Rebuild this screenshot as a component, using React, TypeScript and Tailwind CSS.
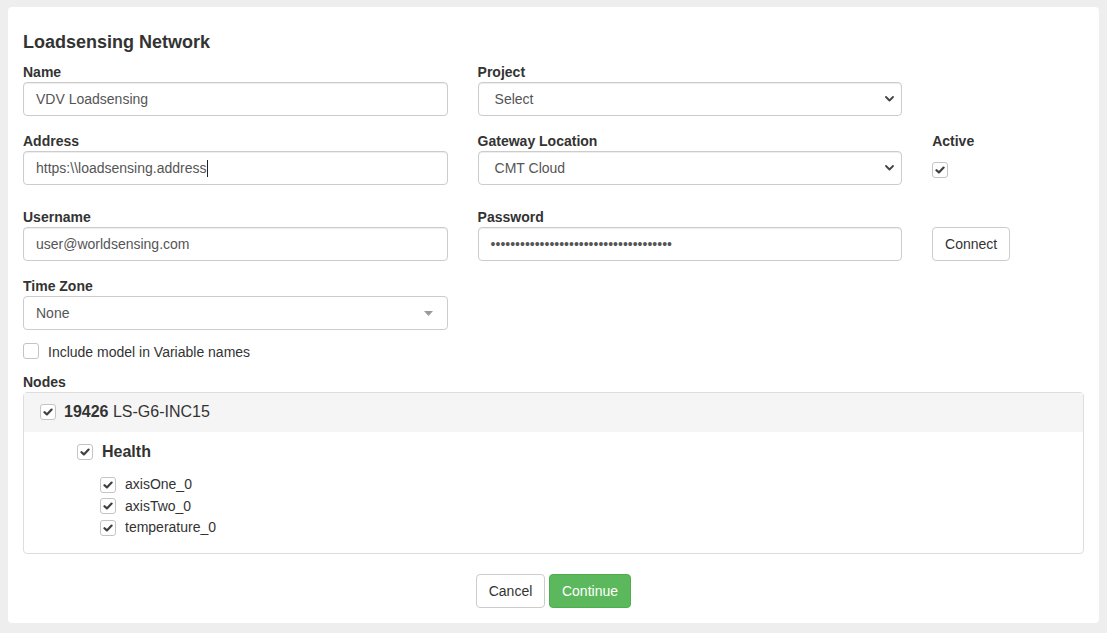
import React from "react";

const font = { fontFamily: '"Liberation Sans", Arial, Helvetica, sans-serif' };

function Check({ size = 16 }: { size?: number }) {
  return (
    <span
      className="inline-flex shrink-0 items-center justify-center rounded-[3px] border border-[#c4c4c4] bg-white"
      style={{ width: size, height: size }}
    >
      <svg width="10" height="8" viewBox="0 0 10 8" fill="none">
        <path d="M1.5 4.2 L3.9 6.4 L8.6 1.6" stroke="#3f3f3f" strokeWidth="2.2" strokeLinecap="round" strokeLinejoin="round" />
      </svg>
    </span>
  );
}

function Empty() {
  return <span className="inline-block h-[16px] w-[16px] shrink-0 rounded-[3px] border border-[#c4c4c4] bg-white" />;
}

function Label({ children }: { children: React.ReactNode }) {
  return <div className="h-[20px] text-[14px] font-bold leading-[20px] text-[#333]">{children}</div>;
}

function Field({ children }: { children: React.ReactNode }) {
  return (
    <div className="flex h-[34px] items-center rounded-[4px] border border-[#ccc] bg-white px-[12px] text-[14px] text-[#555] shadow-[inset_0_1px_1px_rgba(0,0,0,0.075)]">
      {children}
    </div>
  );
}

function NativeSelect({ value }: { value: string }) {
  return (
    <div className="flex h-[34px] items-center justify-between rounded-[4px] border border-[#ccc] bg-white pl-[16px] pr-[7px] text-[14px] text-[#555] shadow-[inset_0_1px_1px_rgba(0,0,0,0.075)]">
      <span>{value}</span>
      <svg width="9" height="6" viewBox="0 0 9 6" fill="none">
        <path d="M1 1 L4.5 4.5 L8 1" stroke="#444" strokeWidth="1.8" strokeLinecap="round" strokeLinejoin="round" />
      </svg>
    </div>
  );
}

export default function App() {
  return (
    <div style={font} className="min-h-screen bg-[#eeeeee] px-[8px] pb-[10px] pt-[7px] text-[#333]">
      <div className="rounded-[4px] bg-white px-[15px] pb-[15px] pt-[25px]">
        <h4 className="mb-[10px] h-[20px] text-[18px] font-bold leading-[20px] text-[#333]">Loadsensing Network</h4>

        {/* Row 1 */}
        <div className="-mx-[15px] flex">
          <div className="w-5/12 px-[15px]">
            <Label>Name</Label>
            <Field>VDV Loadsensing</Field>
          </div>
          <div className="w-5/12 px-[15px]">
            <Label>Project</Label>
            <NativeSelect value="Select" />
          </div>
          <div className="w-2/12 px-[15px]" />
        </div>

        {/* Row 2 */}
        <div className="-mx-[15px] mt-[15px] flex">
          <div className="w-5/12 px-[15px]">
            <Label>Address</Label>
            <Field>
              <span>https:\\loadsensing.address</span>
              <span className="ml-[1px] inline-block h-[17px] w-[1px] bg-[#222]" />
            </Field>
          </div>
          <div className="w-5/12 px-[15px]">
            <Label>Gateway Location</Label>
            <NativeSelect value="CMT Cloud" />
          </div>
          <div className="w-2/12 px-[15px]">
            <Label>Active</Label>
            <div className="mt-[11px] flex">
              <Check />
            </div>
          </div>
        </div>

        {/* Row 3 */}
        <div className="-mx-[15px] mt-[22px] flex">
          <div className="w-5/12 px-[15px]">
            <Label>Username</Label>
            <Field>user@worldsensing.com</Field>
          </div>
          <div className="w-5/12 px-[15px]">
            <Label>Password</Label>
            <div className="flex h-[34px] items-center rounded-[4px] border border-[#ccc] bg-white px-[12px] shadow-[inset_0_1px_1px_rgba(0,0,0,0.075)]">
              <span className="text-[14px] tracking-[0px] text-[#555]">
                {"•".repeat(37)}
              </span>
            </div>
          </div>
          <div className="w-2/12 px-[15px]">
            <div className="mt-[20px] flex">
              <button className="h-[34px] w-[78px] rounded-[4px] border border-[#ccc] bg-white text-[14px] text-[#333]">
                Connect
              </button>
            </div>
          </div>
        </div>

        {/* Row 4 */}
        <div className="-mx-[15px] mt-[15px] flex">
          <div className="w-5/12 px-[15px]">
            <Label>Time Zone</Label>
            <div className="flex h-[34px] items-center justify-between rounded-[4px] border border-[#ccc] bg-white pl-[12px] pr-[14px] text-[14px] text-[#555]">
              <span>None</span>
              <svg width="9" height="5" viewBox="0 0 9 5">
                <path d="M0 0 L9 0 L4.5 5 Z" fill="#999" />
              </svg>
            </div>
          </div>
        </div>

        {/* Include model */}
        <div className="mt-[12px] flex h-[18px] items-center gap-[9px] text-[14px] text-[#333]">
          <Empty />
          <span className="pt-[2px]">Include model in Variable names</span>
        </div>

        <div className="mt-[12px]">
          <Label>Nodes</Label>
        </div>

        <div className="rounded-[4px] border border-[#ddd]">
          <div className="flex h-[39px] items-center gap-[8px] bg-[#f5f5f5] pb-[1px] pl-[16px] text-[16px] text-[#333]">
            <Check />
            <span>
              <b>19426</b> LS-G6-INC15
            </span>
          </div>
          <div className="pb-[14px] pl-[53px] pt-[9px]">
            <div className="flex h-[22px] items-center gap-[9px] text-[16px] font-bold text-[#333]">
              <Check />
              <span>Health</span>
            </div>
            <div className="mt-[11px] flex flex-col pl-[23px]">
              {["axisOne_0", "axisTwo_0", "temperature_0"].map((t) => (
                <div key={t} className="flex h-[21.5px] items-center gap-[9px] text-[14px] text-[#333]">
                  <Check />
                  <span>{t}</span>
                </div>
              ))}
            </div>
          </div>
        </div>

        <div className="mt-[20px] flex justify-center gap-[4px]">
          <button className="h-[34px] w-[69px] rounded-[4px] border border-[#ccc] bg-white pt-[1px] text-[14px] text-[#333]">
            Cancel
          </button>
          <button className="h-[34px] w-[82px] rounded-[4px] border border-[#4cae4c] bg-[#5cb85c] pt-[1px] text-[14px] text-white">
            Continue
          </button>
        </div>
      </div>
    </div>
  );
}
